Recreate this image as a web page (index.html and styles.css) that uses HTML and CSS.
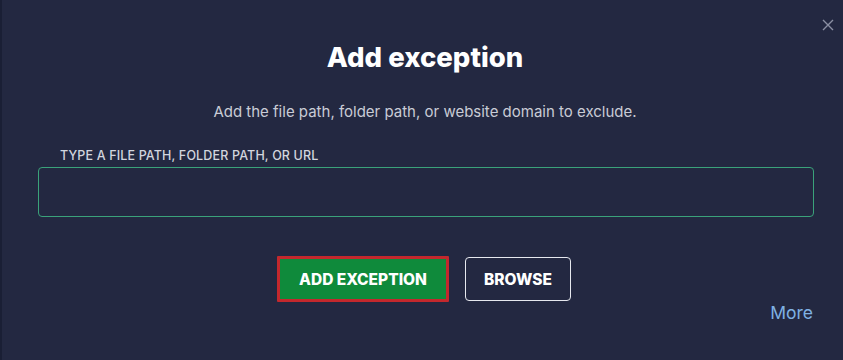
FILE: index.html
```html
<!DOCTYPE html>
<html>
<head>
<meta charset="utf-8">
<link rel="stylesheet" href="styles.css">
</head>
<body>
<div class="dialog">
  <button class="close" aria-label="Close">
    <svg width="12" height="12" viewBox="0 0 12 12"><path d="M1 1 L11 11 M11 1 L1 11" stroke="#8b90a3" stroke-width="1.4" fill="none"/></svg>
  </button>
  <h1 class="title">Add exception</h1>
  <p class="subtitle">Add the file path, folder path, or website domain to exclude.</p>
  <div class="field">
    <label class="label">TYPE A FILE PATH, FOLDER PATH, OR URL</label>
    <div class="input"></div>
  </div>
  <div class="actions">
    <button class="btn btn-primary">ADD EXCEPTION</button>
    <button class="btn btn-secondary">BROWSE</button>
  </div>
  <div class="footer"><a class="more">More</a></div>
</div>
</body>
</html>
```
FILE: styles.css
```css
html, body {
  margin: 0;
  padding: 0;
  background: #232841;
}
body {
  width: 843px;
  height: 360px;
  overflow: hidden;
  font-family: Inter, "Noto Sans", sans-serif;
}
.dialog {
  position: relative;
  height: 360px;
  box-sizing: border-box;
  border-left: 2px solid #1a1f35;
  padding-top: 41px;
  padding-left: 5px;
  display: flex;
  flex-direction: column;
}
.close {
  position: absolute;
  top: 19px;
  right: 9px;
  background: none;
  border: 0;
  padding: 0;
  width: 12px;
  height: 12px;
  display: flex;
}
.title {
  margin: 0;
  text-align: center;
  font-size: 27.5px;
  line-height: 32px;
  font-weight: 800;
  color: #ffffff;
  letter-spacing: 0;
}
.subtitle {
  margin: 29px 0 0;
  text-align: center;
  font-size: 15px;
  line-height: 20px;
  color: #c9ccd6;
}
.field {
  margin: 26px 29px 0 31px;
  display: flex;
  flex-direction: column;
}
.label {
  margin-left: 22px;
  font-size: 12.5px;
  line-height: 16px;
  font-weight: 500;
  color: #d2d5de;
  letter-spacing: 0.15px;
}
.input {
  margin-top: 3px;
  height: 50px;
  box-sizing: border-box;
  border: 1px solid #3aa27a;
  border-radius: 4px;
  background: #232841;
}
.actions {
  margin-top: 39px;
  display: flex;
  justify-content: center;
  align-items: center;
  gap: 16px;
  padding-right: 2px;
}
.btn {
  font-family: Inter, "Noto Sans", sans-serif;
  font-weight: 800;
  font-size: 15.5px;
  letter-spacing: 0;
  color: #ffffff;
  cursor: pointer;
  padding: 0;
}
.btn-primary {
  width: 172px;
  height: 46px;
  background: #0f8a3b;
  border: 3px solid #c3282d;
  border-radius: 1px;
}
.btn-secondary {
  width: 106px;
  height: 44px;
  background: transparent;
  border: 1px solid #e6e8ee;
  border-radius: 4px;
}
.footer {
  margin-top: 1px;
  display: flex;
  justify-content: flex-end;
  padding-right: 30px;
}
.more {
  font-size: 17.5px;
  line-height: 20px;
  color: #7fb1e3;
}
```
